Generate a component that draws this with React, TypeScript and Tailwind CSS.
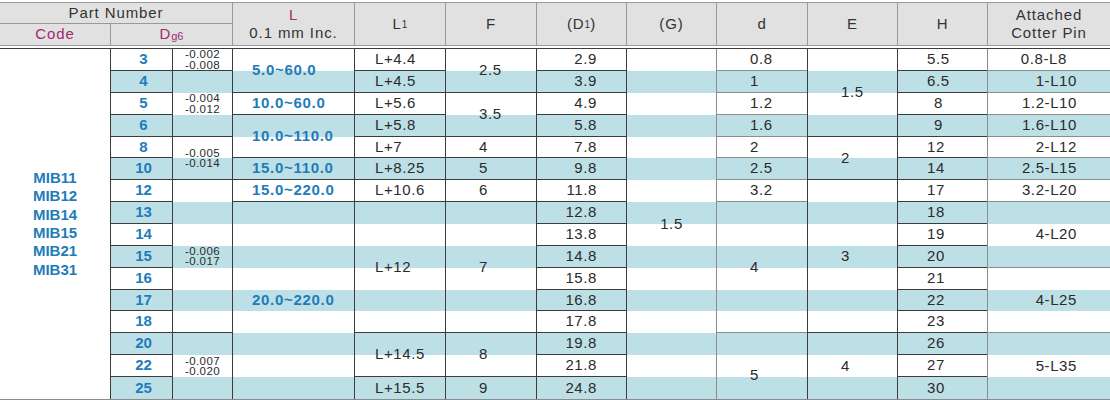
import * as React from "react"

type Cell = { span: number; text?: React.ReactNode; cls?: string }
type Col = { col: number; line: "dark" | "grey"; cls: string; cells: Cell[] }

const singles = (items: string[]): Cell[] => items.map((t) => ({ span: 1, text: t }))

const Tol = ({ a, b }: { a: string; b: string }) => (
  <div className="flex flex-col items-center text-[11.5px] leading-[10.5px] tracking-[0.4px] text-[#2b2b2b]">
    <span>{a}</span>
    <span>{b}</span>
  </div>
)

const blueNum = "justify-center pl-[4px] text-[15px] font-bold text-[#1f7cba]"
const plain = "text-[15px] tracking-[0.6px] text-[#2b2b2b]"

const columns: Col[] = [
  {
    col: 2,
    line: "dark",
    cls: blueNum,
    cells: singles(["3", "4", "5", "6", "8", "10", "12", "13", "14", "15", "16", "17", "18", "20", "22", "25"]),
  },
  {
    col: 3,
    line: "dark",
    cls: "justify-center",
    cells: [
      { span: 1, text: <Tol a="-0.002" b="-0.008" /> },
      { span: 3, text: <Tol a="-0.004" b="-0.012" /> },
      { span: 2, text: <Tol a="-0.005" b="-0.014" /> },
      { span: 7, text: <Tol a="-0.006" b="-0.017" /> },
      { span: 3, text: <Tol a="-0.007" b="-0.020" /> },
    ],
  },
  {
    col: 4,
    line: "dark",
    cls: "pl-[19px] text-[15px] font-bold tracking-[0.7px] text-[#1f7cba]",
    cells: [
      { span: 2, text: "5.0~60.0" },
      { span: 1, text: "10.0~60.0" },
      { span: 2, text: "10.0~110.0" },
      { span: 1, text: "15.0~110.0" },
      { span: 1, text: "15.0~220.0" },
      { span: 9, text: "20.0~220.0" },
    ],
  },
  {
    col: 5,
    line: "dark",
    cls: "pl-[20px] " + plain,
    cells: [
      ...singles(["L+4.4", "L+4.5", "L+5.6", "L+5.8", "L+7", "L+8.25", "L+10.6"]),
      { span: 6, text: "L+12" },
      { span: 2, text: "L+14.5" },
      { span: 1, text: "L+15.5" },
    ],
  },
  {
    col: 6,
    line: "dark",
    cls: "pl-[33px] " + plain,
    cells: [
      { span: 2, text: "2.5" },
      { span: 2, text: "3.5" },
      { span: 1, text: "4" },
      { span: 1, text: "5" },
      { span: 1, text: "6" },
      { span: 6, text: "7" },
      { span: 2, text: "8" },
      { span: 1, text: "9" },
    ],
  },
  {
    col: 7,
    line: "dark",
    cls: "justify-end pr-[29px] " + plain,
    cells: singles([
      "2.9", "3.9", "4.9", "5.8", "7.8", "9.8", "11.8", "12.8",
      "13.8", "14.8", "15.8", "16.8", "17.8", "19.8", "21.8", "24.8",
    ]),
  },
  {
    col: 8,
    line: "dark",
    cls: "justify-center " + plain,
    cells: [{ span: 16, text: "1.5" }],
  },
  {
    col: 9,
    line: "grey",
    cls: "pl-[33px] " + plain,
    cells: [
      ...singles(["0.8", "1", "1.2", "1.6", "2", "2.5", "3.2"]),
      { span: 6, text: "4" },
      { span: 3, text: "5", cls: "pt-[18px]" },
    ],
  },
  {
    col: 10,
    line: "dark",
    cls: "pl-[33px] " + plain,
    cells: [
      { span: 4, text: "1.5" },
      { span: 2, text: "2" },
      { span: 7, text: "3" },
      { span: 3, text: "4" },
    ],
  },
  {
    col: 11,
    line: "dark",
    cls: "pl-[29px] " + plain,
    cells: [
      { span: 1, text: "5.5" },
      { span: 1, text: "6.5" },
      { span: 1, text: "8", cls: "pl-[36px]" },
      { span: 1, text: "9", cls: "pl-[36px]" },
      ...singles(["12", "14", "17", "18", "19", "20", "21", "22", "23", "26", "27", "30"]),
    ],
  },
  {
    col: 12,
    line: "grey",
    cls: "justify-end pr-[33px] " + plain,
    cells: [
      { span: 1, text: "0.8-L8", cls: "pr-[43px]" },
      ...singles(["1-L10", "1.2-L10", "1.6-L10", "2-L12", "2.5-L15", "3.2-L20"]),
      { span: 3, text: "4-L20" },
      { span: 3, text: "4-L25" },
      { span: 3, text: "5-L35" },
    ],
  },
]

const GRID_COLS = "grid-cols-[110px_62px_60px_122px_91px_91px_90px_90px_91px_90px_90px_123px]"

const Sub = ({ children }: { children: React.ReactNode }) => (
  <span className="text-[10px] tracking-normal">{children}</span>
)

const Header = () => (
  <div className={`grid ${GRID_COLS} grid-rows-[21px_21px] border-y border-[#9a9a9a] bg-[#e1e1e1] text-[15px] tracking-[0.9px] text-[#333]`}>
    <div className="col-span-3 flex items-center justify-center border-b border-[#9a9a9a]">Part Number</div>
    <div className="col-start-1 row-start-2 flex items-center justify-center text-[#a22a72]">Code</div>
    <div className="col-span-2 col-start-2 row-start-2 flex items-center justify-center border-l border-[#9a9a9a] text-[#a22a72]">
      D<span className="relative top-[2px] text-[11px] tracking-normal">g6</span>
    </div>
    <div className="col-start-4 row-span-2 row-start-1 flex flex-col items-center justify-center border-l border-[#9a9a9a] leading-[18px]">
      <span className="text-[#a22a72]">L</span>
      <span>0.1 mm Inc.</span>
    </div>
    <div className="col-start-5 row-span-2 row-start-1 flex items-center justify-center border-l border-[#9a9a9a]">
      L<Sub>1</Sub>
    </div>
    <div className="col-start-6 row-span-2 row-start-1 flex items-center justify-center border-l border-[#9a9a9a]">F</div>
    <div className="col-start-7 row-span-2 row-start-1 flex items-center justify-center border-l border-[#9a9a9a]">
      (D<Sub>1</Sub>)
    </div>
    <div className="col-start-8 row-span-2 row-start-1 flex items-center justify-center border-l border-[#9a9a9a]">(G)</div>
    <div className="col-start-9 row-span-2 row-start-1 flex items-center justify-center border-l border-[#9a9a9a]">d</div>
    <div className="col-start-10 row-span-2 row-start-1 flex items-center justify-center border-l border-[#9a9a9a]">E</div>
    <div className="col-start-11 row-span-2 row-start-1 flex items-center justify-center border-l border-[#9a9a9a]">H</div>
    <div className="col-start-12 row-span-2 row-start-1 flex flex-col items-center justify-center border-l border-[#9a9a9a] leading-[18px]">
      <span>Attached</span>
      <span>Cotter Pin</span>
    </div>
  </div>
)

const Body = () => {
  const cells: React.ReactNode[] = []
  columns.forEach((c) => {
    let row = 1
    c.cells.forEach((cell, i) => {
      const last = row + cell.span - 1 === 16
      const lineColor = c.line === "dark" ? "border-[#3c3c3c]" : "border-[#8c8c8c]"
      cells.push(
        <div
          key={`${c.col}-${i}`}
          style={{ gridColumn: c.col, gridRow: `${row} / span ${cell.span}` }}
          className={`flex items-center border-l ${last ? "" : "border-b"} ${lineColor} ${c.cls} ${cell.cls ?? ""}`}
        >
          {cell.text}
        </div>
      )
      row += cell.span
    })
  })

  return (
    <div className={`grid ${GRID_COLS} grid-rows-[22px_22px_22px_22px_21px_22px_22px_22px_22px_22px_22px_21px_22px_22px_22px_22px] border-t border-b border-t-[#3c3c3c] border-b-[#8c8c8c]`}>
      {/* stripes */}
      {Array.from({ length: 16 }, (_, i) =>
        i % 2 === 1 ? (
          <div key={`s${i}`} style={{ gridColumn: "2 / -1", gridRow: i + 1 }} className="bg-[#bde0e6]" />
        ) : null
      )}

      {/* code column */}
      <div
        style={{ gridColumn: 1, gridRow: "1 / span 16" }}
        className="flex flex-col items-center justify-center bg-white text-[15px] font-bold leading-[18.4px] text-[#1f7cba]"
      >
        <span>MIB11</span>
        <span>MIB12</span>
        <span>MIB14</span>
        <span>MIB15</span>
        <span>MIB21</span>
        <span>MIB31</span>
      </div>

      {cells}
    </div>
  )
}

export default function App() {
  return (
    <div className="h-[400px] w-[1110px] bg-white pt-[2px] font-['Liberation_Sans',Arial,sans-serif]">
      <Header />
      <div className="h-[2px]" />
      <Body />
    </div>
  )
}
